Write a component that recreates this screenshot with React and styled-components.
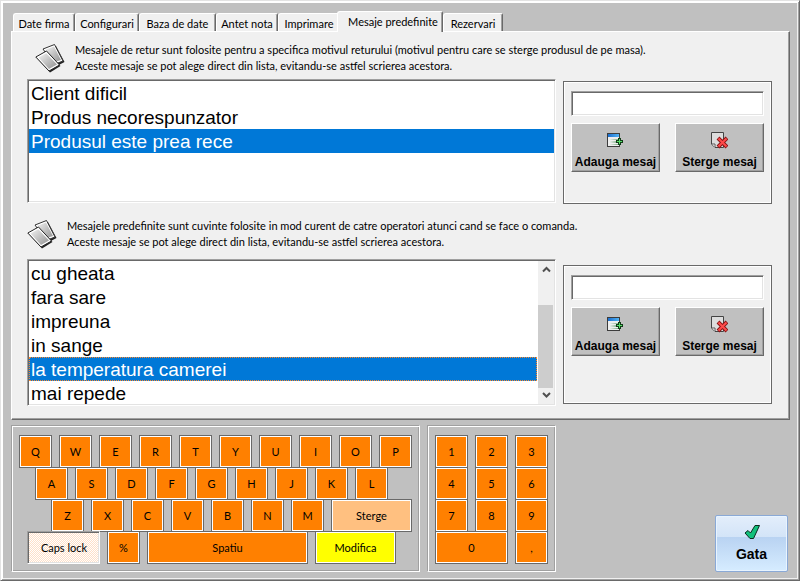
import React, { useState } from "react";
import styled, { createGlobalStyle, css } from "styled-components";

const GlobalStyle = createGlobalStyle`
  *, *::before, *::after { box-sizing: border-box; }
  body { margin: 0; background: #c0c0c0; }
  button, input { font: inherit; color: inherit; margin: 0; padding: 0; border-radius: 0; }
  p, ul { margin: 0; padding: 0; }
`;

const sunken = css`
  border: 1px solid;
  border-color: #a0a0a0 #fff #fff #a0a0a0;
  box-shadow: inset 1px 1px #696969, inset -1px -1px #e3e3e3;
`;

const raised = css`
  border: 1px solid;
  border-color: #fff #696969 #696969 #fff;
  box-shadow: inset -1px -1px #a0a0a0;
`;

const Window = styled.main`
  display: flex;
  flex-direction: column;
  min-height: 100vh;
  padding: 9px 9px 7px 10px;
  background: #c0c0c0;
  border: 1px solid;
  border-color: #e3e3e3 #696969 #696969 #e3e3e3;
  box-shadow: inset 1px 1px #fff, inset -1px -1px #a0a0a0, inset 2px 2px #fff, inset -2px -2px #f0f0f0;
  color: #000;
  font: 11px/16px Lato, "Liberation Sans", sans-serif;
`;

const TabList = styled.div`
  display: flex;
  align-items: flex-end;
  height: 21px;
  padding-left: 2px;
`;

const Tab = styled.button`
  width: ${(p) => p.$width}px;
  height: 18px;
  border: 1px solid;
  border-color: #fff #696969 transparent #fff;
  border-bottom: 0;
  border-radius: 3px 2px 0 0;
  box-shadow: inset -1px 0 #a0a0a0;
  background: #f0f0f0;
  white-space: nowrap;
  line-height: 20px;

  &[aria-selected="true"] {
    z-index: 1;
    height: 21px;
    margin: 0 0 -1px -3px;
    padding: 0 0 1px 6px;
  }
`;

const Panel = styled.section`
  ${raised}
  padding: 10px 17px 13px 15px;
  background: #f0f0f0;
`;

const Intro = styled.header`
  display: flex;
  align-items: center;
  gap: 10px;
  height: 32px;
  margin-top: ${(p) => p.$top}px;
  padding-left: ${(p) => p.$indent}px;
  white-space: nowrap;
`;

const Section = styled.div`
  display: grid;
  grid-template-columns: 1fr 209px;
  column-gap: 7px;
  align-items: start;
  margin-top: ${(p) => p.$top}px;
`;

const ListFrame = styled.div`
  ${sunken}
  display: flex;
  height: ${(p) => p.$height}px;
  padding: 1px;
  background: #fff;
`;

const List = styled.ul`
  flex: 1;
  overflow: hidden;
  list-style: none;
  font: 19px/26px "Liberation Sans", Arial, sans-serif;
`;

const Item = styled.li`
  height: 24px;
  padding-left: 2px;
  white-space: nowrap;
  cursor: default;

  &[aria-selected="true"] {
    background: #0078d7;
    color: #fff;
    outline: ${(p) => (p.$focused ? "1px dotted #ff8728" : "none")};
    outline-offset: -1px;
  }
`;

const ScrollBar = styled.div`
  display: flex;
  flex-direction: column;
  width: 16px;
  margin-left: 1px;
  background: #f0f0f0;
`;

const ScrollButton = styled.button`
  display: grid;
  place-items: center;
  height: 17px;
  border: 0;
  background: none;
`;

const ScrollTrack = styled.div`
  flex: 1;
  padding-top: 27px;
`;

const ScrollThumb = styled.div`
  height: 83px;
  margin-right: 1px;
  background: #cdcdcd;
`;

const Group = styled.div`
  display: grid;
  grid-template-columns: 89px 89px;
  justify-content: space-between;
  align-content: start;
  row-gap: 7px;
  height: ${(p) => p.$height}px;
  margin-top: ${(p) => p.$top}px;
  padding: 9px 7px;
  border: 1px solid #696969;
  box-shadow: inset 0 0 0 1px #fff;
`;

const TextBox = styled.input`
  ${sunken}
  grid-column: 1 / -1;
  width: 100%;
  height: 25px;
  padding: 0 4px;
  background: #fff;
  outline: none;
`;

const Action = styled.button`
  ${raised}
  display: flex;
  flex-direction: column;
  align-items: center;
  justify-content: flex-end;
  gap: 5px;
  height: 49px;
  padding-bottom: 1px;
  background: #c0c0c0;
  font: bold 12px/16px "Liberation Sans", Arial, sans-serif;
  white-space: nowrap;
`;

const Footer = styled.div`
  display: flex;
  align-items: flex-end;
  gap: 7px;
  margin-top: 5px;
`;

const Pad = styled.div`
  padding: 9px 7px 7px;
  border: 1px solid;
  border-color: #a0a0a0 #fff #fff #a0a0a0;
  box-shadow: inset 1px 1px #fff, inset -1px -1px #a0a0a0;
`;

const KeyRow = styled.div`
  display: flex;
  gap: 7px;
  margin-bottom: -1px;
  padding-left: ${(p) => p.$indent || 0}px;

  &:last-child { margin-bottom: 0; }
`;

const keyColors = {
  key: "#ff8000",
  erase: "#ffc080",
  edit: "#ffff00",
};

const Key = styled.button`
  width: ${(p) => p.$width || 33}px;
  height: 33px;
  border: 1px solid #696969;
  box-shadow: inset 0 0 0 1px #fff;
  background: ${(p) => keyColors[p.$kind || "key"]};
`;

const CapsKey = styled.button`
  ${sunken}
  width: 73px;
  height: 33px;
  padding-left: 1px;
  background: repeating-conic-gradient(#ffe0c8 0 25%, #fff 0 50%) 0 0 / 2px 2px;
`;

const Done = styled.button`
  display: flex;
  flex-direction: column;
  align-items: center;
  gap: 4px;
  width: 73px;
  height: 57px;
  margin: 0 2px 0 auto;
  padding-top: 8px;
  border: 1px solid #8aa9d6;
  border-radius: 2px;
  box-shadow: inset 0 0 0 1px #e8f4ff;
  background: linear-gradient(#e3eefb, #d3e4f8 38%, #b9d3f2 39%, #d6ecff);
  font: bold 14px/20px "Liberation Sans", Arial, sans-serif;
`;

const CardsIcon = () => (
  <svg width="30" height="30" viewBox="0 0 30 30" aria-hidden="true">
    <defs>
      <linearGradient id="card" x1="0" y1="0" x2="1" y2="1">
        <stop offset="0" stopColor="#f2f2f2" />
        <stop offset="1" stopColor="#929292" />
      </linearGradient>
    </defs>
    <path d="M10 7 21 3 29.500 19 20 24Z" fill="#222" />
    <path d="M8 6 19.500 1.500 28 18 19 21.500Z" fill="#fff" stroke="#333" />
    <path d="M10 7 19 3.500 26 17 18 19.500Z" fill="url(#card)" />
    <path d="M2 15 12 9 25.500 23 15 29.500Z" fill="#222" />
    <path d="M.8 14 11.500 8 24.500 22 14 28Z" fill="#fff" stroke="#222" />
    <path d="M3.500 14.500 11.300 10.200 22 21.500 14 26Z" fill="url(#card)" />
  </svg>
);

const AddIcon = () => (
  <svg width="17" height="16" viewBox="0 0 17 16" aria-hidden="true">
    <defs>
      <linearGradient id="bar">
        <stop offset="0" stopColor="#1c6fd0" />
        <stop offset="1" stopColor="#52b4f4" />
      </linearGradient>
      <linearGradient id="rows">
        <stop offset="0" stopColor="#f4f4f4" />
        <stop offset="1" stopColor="#7fae86" />
      </linearGradient>
    </defs>
    <rect x=".5" y=".5" width="12" height="13" fill="#eee" stroke="#3c3c3c" />
    <rect x="1" y="1" width="11" height="3" fill="url(#bar)" />
    <path d="M2 6h9v1H2ZM2 8h9v2H2ZM2 11h9v1H2Z" fill="url(#rows)" />
    <path d="M11 5h3v2h2v3h-2v2h-3v-2H9V7h2Z" fill="#123d18" />
    <path d="M12.500 6v5M10 8.500h5" stroke="#58e068" />
  </svg>
);

const DeleteIcon = () => (
  <svg width="17" height="17" viewBox="0 0 17 17" aria-hidden="true">
    <path d="M.5.5h12v15H4L.5 12Z" fill="#ddd" stroke="#444" />
    <path d="M1 12h3v3" fill="#fff" stroke="#555" />
    <path d="m7 6 9 9M16 6l-9 9" stroke="#8a1515" strokeWidth="4" />
    <path d="m7.500 6.500 8 8M15.500 6.500l-8 8" stroke="#ff4b4b" strokeWidth="2" />
  </svg>
);

const CheckIcon = () => (
  <svg width="16" height="16" viewBox="0 0 16 16" aria-hidden="true">
    <path d="M1 9 4 6.500 6.500 9 11 1.500 15.500 1.500 9.500 14.500 6 14.500Z" fill="#12c07c" stroke="#0a2a1c" />
  </svg>
);

const Chevron = ({ down }) => (
  <svg width="9" height="7" viewBox="0 0 9 7" aria-hidden="true">
    <path d={down ? "M1 1 4.500 4.500 8 1" : "M1 5.500 4.500 2 8 5.500"} fill="none" stroke="#505050" strokeWidth="2" />
  </svg>
);

const tabs = [
  ["Date firma", 62],
  ["Configurari", 64],
  ["Baza de date", 77],
  ["Antet nota", 62],
  ["Imprimare", 62],
  ["Mesaje predefinite", 106],
  ["Rezervari", 60],
];

function MessageList({ label, items, initial, height, focused, scroll }) {
  const [selected, setSelected] = useState(initial);
  return (
    <ListFrame $height={height}>
      <List role="listbox" aria-label={label}>
        {items.map((text) => (
          <Item key={text} role="option" aria-selected={text === selected} $focused={focused} onClick={() => setSelected(text)}>
            {text}
          </Item>
        ))}
      </List>
      {scroll && (
        <ScrollBar>
          <ScrollButton aria-label="Sus"><Chevron /></ScrollButton>
          <ScrollTrack><ScrollThumb /></ScrollTrack>
          <ScrollButton aria-label="Jos"><Chevron down /></ScrollButton>
        </ScrollBar>
      )}
    </ListFrame>
  );
}

const Editor = ({ label, height, top }) => (
  <Group $height={height} $top={top}>
    <TextBox type="text" aria-label={label} />
    <Action><AddIcon />Adauga mesaj</Action>
    <Action><DeleteIcon />Sterge mesaj</Action>
  </Group>
);

const Keys = ({ chars }) => [...chars].map((c) => <Key key={c}>{c}</Key>);

export default function App() {
  const [active, setActive] = useState("Mesaje predefinite");
  return (
    <>
      <GlobalStyle />
      <Window>
        <TabList role="tablist">
          {tabs.map(([name, width]) => (
            <Tab key={name} role="tab" $width={width} aria-selected={name === active} onClick={() => setActive(name)}>
              {name}
            </Tab>
          ))}
        </TabList>
        <Panel role="tabpanel" aria-label={active}>
          <Intro $top={0} $indent={8}>
            <CardsIcon />
            <p>
              Mesajele de retur sunt folosite pentru a specifica motivul returului (motivul pentru care se sterge produsul de pe masa).
              <br />
              Aceste mesaje se pot alege direct din lista, evitandu-se astfel scrierea acestora.
            </p>
          </Intro>
          <Section $top={5}>
            <MessageList
              label="Mesaje de retur"
              items={["Client dificil", "Produs necorespunzator", "Produsul este prea rece"]}
              initial="Produsul este prea rece"
              height={124}
            />
            <Editor label="Mesaj de retur nou" height={123} top={2} />
          </Section>
          <Intro $top={14} $indent={0}>
            <CardsIcon />
            <p>
              Mesajele predefinite sunt cuvinte folosite in mod curent de catre operatori atunci cand se face o comanda.
              <br />
              Aceste mesaje se pot alege direct din lista, evitandu-se astfel scrierea acestora.
            </p>
          </Intro>
          <Section $top={9}>
            <MessageList
              label="Mesaje predefinite"
              items={["cu gheata", "fara sare", "impreuna", "in sange", "la temperatura camerei", "mai repede"]}
              initial="la temperatura camerei"
              height={147}
              focused
              scroll
            />
            <Editor label="Mesaj predefinit nou" height={139} top={6} />
          </Section>
        </Panel>
        <Footer>
          <Pad>
            <KeyRow><Keys chars="QWERTYUIOP" /></KeyRow>
            <KeyRow $indent={16}><Keys chars="ASDFGHJKL" /></KeyRow>
            <KeyRow $indent={32}>
              <Keys chars="ZXCVBNM" />
              <Key $width={81} $kind="erase">Sterge</Key>
            </KeyRow>
            <KeyRow $indent={8}>
              <CapsKey aria-pressed="true">Caps lock</CapsKey>
              <Key>%</Key>
              <Key $width={161}>Spatiu</Key>
              <Key $width={81} $kind="edit">Modifica</Key>
            </KeyRow>
          </Pad>
          <Pad>
            <KeyRow><Keys chars="123" /></KeyRow>
            <KeyRow><Keys chars="456" /></KeyRow>
            <KeyRow><Keys chars="789" /></KeyRow>
            <KeyRow>
              <Key $width={73}>0</Key>
              <Key>,</Key>
            </KeyRow>
          </Pad>
          <Done><CheckIcon />Gata</Done>
        </Footer>
      </Window>
    </>
  );
}
